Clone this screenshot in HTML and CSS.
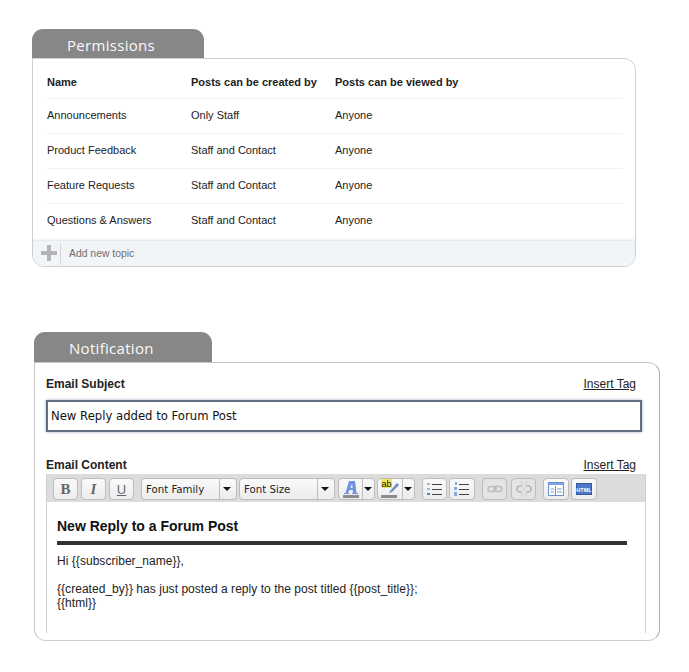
FILE: index.html
```html
<!DOCTYPE html>
<html lang="en">
<head>
<meta charset="utf-8">
<title>Forum settings</title>
<link rel="stylesheet" href="styles.css">
</head>
<body>
<section class="section section-perm">
  <h2 class="tab tab-perm">Permissions</h2>
  <div class="panel panel-perm">
    <div class="rows">
      <div class="row row-head"><span>Name</span><span>Posts can be created by</span><span>Posts can be viewed by</span></div>
      <div class="row"><span>Announcements</span><span>Only Staff</span><span>Anyone</span></div>
      <div class="row"><span>Product Feedback</span><span>Staff and Contact</span><span>Anyone</span></div>
      <div class="row"><span>Feature Requests</span><span>Staff and Contact</span><span>Anyone</span></div>
      <div class="row row-last"><span>Questions &amp; Answers</span><span>Staff and Contact</span><span>Anyone</span></div>
    </div>
    <div class="add-bar">
      <span class="add-icon"><svg width="16" height="16" viewBox="0 0 16 16"><path d="M6 0h4v6h6v4h-6v6H6v-6H0V6h6z" fill="#b4b4b4"/></svg></span>
      <span class="add-label">Add new topic</span>
    </div>
  </div>
</section>

<section class="section section-notif">
  <h2 class="tab tab-notif">Notification</h2>
  <div class="panel panel-notif">
    <div class="field-head field-head-subject"><label>Email Subject</label><a href="#">Insert Tag</a></div>
    <div class="subject">New Reply added to Forum Post</div>
    <div class="field-head field-head-content"><label>Email Content</label><a href="#">Insert Tag</a></div>
    <div class="editor">
      <div class="toolbar">
        <span class="btn b-b"><b class="g-b">B</b></span>
        <span class="btn b-i"><i class="g-i">I</i></span>
        <span class="btn b-u"><u class="g-u">U</u></span>
        <span class="btn sel sel-family"><span class="sel-text">Font Family</span><span class="arrow"></span></span>
        <span class="btn sel sel-size"><span class="sel-text">Font Size</span><span class="arrow"></span></span>
        <span class="btn split split-a">
          <span class="split-icon"><svg width="20" height="20" viewBox="0 0 20 20"><path d="M8 2h6l1.500 12H17v1h-6v-1h1l-.3-3H8.500L7 14h1.500v1H3v-1h1.500zM9.500 9h2l-.4-4.500z" fill="#6f93dc"/><rect x="2" y="16" width="16" height="3" fill="#8c8c8c"/></svg></span><span class="arrow"></span>
        </span>
        <span class="btn split split-h">
          <span class="split-icon"><svg width="20" height="20" viewBox="0 0 20 20"><rect x="1" y="0" width="11" height="9" fill="#f4e85a"/><text x="1.500" y="8" class="ab">ab</text><path d="M10 12l7-8 2 2-7 7-3 1z" fill="#6f8fc8"/><rect x="1" y="16" width="16" height="3" fill="#8c8c8c"/></svg></span><span class="arrow"></span>
        </span>
        <span class="btn b-ul"><svg width="16" height="16" viewBox="0 0 16 16"><g fill="#9db8e8"><rect x="0" y="2" width="3" height="2"/><rect x="0" y="7" width="3" height="2"/></g><rect x="0" y="12" width="3" height="2" fill="#5a7fc2"/><g fill="#444"><rect x="5" y="3" width="10" height="1"/><rect x="5" y="8" width="10" height="1"/><rect x="5" y="13" width="10" height="1"/></g></svg></span>
        <span class="btn b-ol"><svg width="16" height="16" viewBox="0 0 16 16"><g fill="#8aa8e0"><rect x="1" y="1" width="2" height="3"/><rect x="0" y="6" width="3" height="3"/><rect x="0" y="11" width="3" height="4"/></g><g fill="#444"><rect x="5" y="3" width="10" height="1"/><rect x="5" y="8" width="10" height="1"/><rect x="5" y="13" width="10" height="1"/></g></svg></span>
        <span class="btn b-link dim"><svg width="16" height="16" viewBox="0 0 16 16"><g fill="none" stroke="#bdbdbd" stroke-width="1.500"><rect x="1" y="5.500" width="8" height="5" rx="2.500"/><rect x="7" y="5.500" width="8" height="5" rx="2.500"/></g></svg></span>
        <span class="btn b-unlink dim"><svg width="16" height="18" viewBox="0 0 16 18"><g fill="none" stroke="#b5b5b5" stroke-width="1.500"><path d="M6 6H4a3 3 0 0 0 0 6h2"/><path d="M10 6h2a3 3 0 0 1 0 6h-2"/></g><path d="M5 1l2 4M11 1L9 5M5 17l2-4M11 17l-2-4M8 7v4" stroke="#c4cfe2" fill="none"/></svg></span>
        <span class="btn b-tpl"><svg width="16" height="16" viewBox="0 0 16 16"><rect x=".5" y="1.500" width="15" height="13" fill="#fff" stroke="#6a90d6"/><rect x="1" y="2" width="14" height="2" fill="#7da3e6"/><path d="M7.500 5v9" stroke="#6a90d6"/><path d="M2.500 8h3.500M2.500 11h3.500M9 8h5M9 11h5" stroke="#7d9fdc"/></svg></span>
        <span class="btn b-html"><svg width="16" height="16" viewBox="0 0 16 16"><rect x=".5" y="2.500" width="15" height="11" fill="#4f79c8" stroke="#33589f"/><text x="8" y="10.500" class="html-label" text-anchor="middle">HTML</text></svg></span>
      </div>
      <div class="content">
        <h3>New Reply to a Forum Post</h3>
        <hr>
        <p>Hi {{subscriber_name}},</p>
        <p>{{created_by}} has just posted a reply to the post titled {{post_title}};<br>{{html}}</p>
      </div>
    </div>
  </div>
</section>
</body>
</html>
```

FILE: styles.css
```css
* { box-sizing: border-box; }
html, body { margin: 0; padding: 0; background: #fff; }
body {
  width: 689px;
  height: 672px;
  overflow: hidden;
  font-family: "Liberation Sans", Arial, sans-serif;
  font-size: 11px;
  color: #222;
}
.section-perm { margin: 29px 0 0 32px; width: 604px; }
.section-notif { margin: 65px 0 0 34px; width: 626px; }
.tab {
  margin: 0;
  height: 30px;
  background: #878787;
  color: #fafafa;
  border-radius: 11px 11px 0 0;
  font-family: "Open Sans", sans-serif;
  font-weight: 500;
  font-size: 15px;
  line-height: 30px;
  letter-spacing: .3px;
}
.tab-perm { width: 172px; padding-left: 35px; height: 29px; line-height: 32px; }
.tab-notif { width: 178px; padding-left: 35px; line-height: 33px; }
.panel {
  background: #fff;
  border: 1px solid #cfcfcf;
  border-radius: 0 12px 12px 12px;
}
.panel-perm { height: 209px; display: flex; flex-direction: column; overflow: hidden; }
.rows { flex: 1; padding: 0 12px 0 14px; }
.row {
  display: grid;
  grid-template-columns: 144px 144px 1fr;
  height: 35px;
  align-items: center;
  border-bottom: 1px solid #f1f1f1;
  line-height: 13px;
  padding-bottom: 2px;
}
.row-head { height: 40px; font-weight: 700; padding-top: 7px; padding-bottom: 0; }
.row-last { border-bottom: 0; }
.add-bar {
  height: 26px;
  display: flex;
  align-items: center;
  background: #f2f5f8;
  border-top: 1px solid #e9ebee;
  box-shadow: 0 -1px 2px #f3f1ef;
  color: #6d6d6d;
  font-size: 10.4px;
}
.add-icon {
  width: 28px;
  height: 22px;
  border-right: 1px solid #d5d7da;
  display: flex;
  align-items: center;
  justify-content: flex-end;
  padding: 0 3px 2px 0;
  margin-right: 8px;
}
.panel-notif {
  height: 279px;
  padding: 0 14px 0 11px;
  border-color: #c6c6c6 #adadad #cfcfcf #c6c6c6;
}
.field-head {
  display: flex;
  justify-content: space-between;
  padding-right: 9px;
  line-height: 14px;
  font-size: 12px;
}
.field-head label { font-weight: 700; color: #222; }
.field-head a { color: #222; font-size: 12px; text-decoration: underline; }
.field-head-subject { padding-top: 14px; height: 37px; }
.field-head-content { height: 12px; margin-top: 26px; }
.subject {
  height: 32px;
  width: 596px;
  border: 2px solid #626d80;
  box-shadow: 0 0 3px #a3abbf;
  background: #fff;
  padding-left: 3px;
  font-family: "DejaVu Sans", sans-serif;
  font-size: 11.65px;
  line-height: 29px;
  color: #111;
}
.editor {
  margin-top: 4px;
  width: 600px;
  height: 159px;
  border-left: 1px solid #cfcfcf;
  border-right: 1px solid #cfcfcf;
}
.toolbar {
  height: 28px;
  background: #dcdcdc;
  display: flex;
  align-items: center;
  padding: 2px 0 0 6px;
}
.btn {
  height: 22px;
  width: 25px;
  display: flex;
  align-items: center;
  justify-content: center;
  background: linear-gradient(#fafafa, #ececec);
  border: 1px solid #bdbdbd;
  border-radius: 4px;
  margin-right: 3px;
  flex: none;
}
.dim { background: #e4e4e4; }
.g-b, .g-i { font-family: "Liberation Serif", serif; font-size: 15px; color: #666; font-weight: 700; }
.g-u { font-size: 13px; color: #666; }
.b-u { margin-right: 7px; }
.sel { justify-content: space-between; }
.sel-text { flex: 1; padding-left: 4px; font-family: "DejaVu Sans", sans-serif; font-size: 10.2px; color: #222; }
.arrow {
  width: 17px;
  height: 100%;
  border-left: 1px solid #bdbdbd;
  flex: none;
  position: relative;
}
.arrow::after {
  content: "";
  position: absolute;
  left: 3px;
  top: 8px;
  border: 4px solid transparent;
  border-top: 4px solid #111;
  border-bottom: 0;
}
.sel-family { width: 96px; margin-right: 2px; }
.sel-size { width: 96px; }
.split { justify-content: space-between; }
.split .arrow { width: 12px; }
.split .arrow::after { left: 1px; }
.split-icon { flex: 1; display: flex; justify-content: center; }
.split-a { width: 37px; margin-right: 2px; }
.split-h { width: 38px; margin-right: 7px; }
.b-ul { margin-right: 2px; }
.b-ol { width: 26px; margin-right: 7px; }
.b-link { margin-right: 4px; }
.b-unlink { margin-right: 7px; }
.b-tpl { width: 26px; margin-right: 2px; }
.b-html { width: 26px; margin-right: 0; }
.ab { font-family: "Liberation Sans", sans-serif; font-size: 9px; fill: #111; }
.html-label { font-family: "Liberation Sans", sans-serif; font-size: 5.500px; font-weight: 700; fill: #fff; }
.content { padding: 16px 18px 0 10px; color: #222; }
.content h3 { margin: 0; font-size: 14px; line-height: 16px; font-weight: 700; color: #111; }
.content hr { border: 0; height: 4px; background: #333; margin: 7px 0 9px; }
.content p { margin: 0 0 14px; font-size: 12px; line-height: 14px; letter-spacing: .04px; }
```
